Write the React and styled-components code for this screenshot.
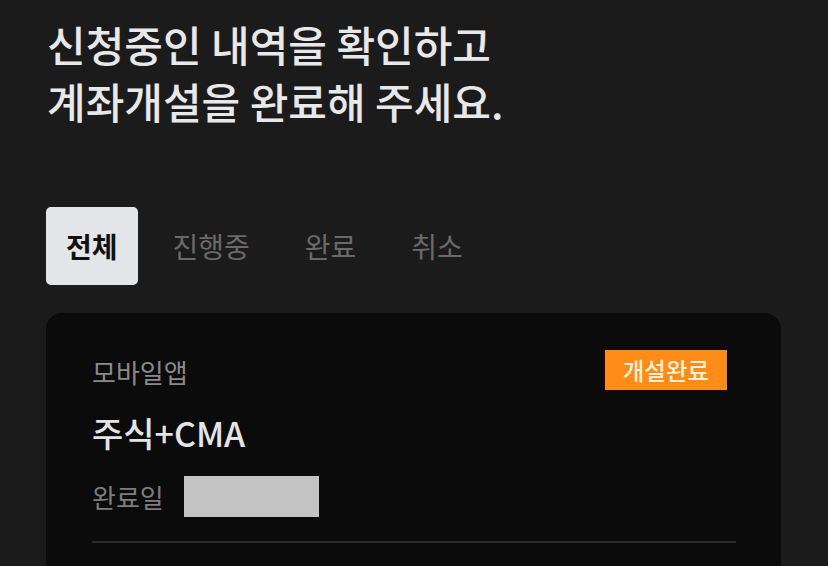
import React from "react";
import styled, { createGlobalStyle } from "styled-components";

const Global = createGlobalStyle`
  html, body { margin: 0; padding: 0; background: #1b1b1b; }
  body { font-family: "Noto Sans CJK KR", "Noto Sans", sans-serif; overflow: hidden; }
`;

const Page = styled.div`
  width: 828px;
  height: 566px;
  background: #1b1b1b;
  padding: 15px 47px 0 46px;
  box-sizing: border-box;
  overflow: hidden;
`;

const Title = styled.h1`
  margin: 0 0 0 1px;
  font-size: 42px;
  line-height: 57px;
  font-weight: 500;
  color: #e8e8ea;
  letter-spacing: 0;
`;

const Tabs = styled.div`
  display: flex;
  gap: 15px;
  margin-top: 78px;
`;

const Tab = styled.button`
  border: none;
  font-family: inherit;
  height: 78px;
  padding: 0 20px;
  border-radius: 5px;
  font-size: 28px;
  font-weight: ${(p) => (p.$active ? 700 : 400)};
  color: ${(p) => (p.$active ? "#111" : "#6a6a6a")};
  background: ${(p) => (p.$active ? "#e4e5e8" : "transparent")};
  cursor: pointer;
`;

const Card = styled.div`
  margin-top: 28px;
  background: #0b0b0b;
  border-radius: 16px;
  padding: 37px 45px 40px 46px;
  height: 400px;
  box-sizing: border-box;
`;

const TopRow = styled.div`
  display: flex;
  justify-content: space-between;
  align-items: flex-start;
`;

const Channel = styled.div`
  font-size: 26px;
  color: #8a8a8a;
  margin-top: 6px;
  line-height: 32px;
`;

const Badge = styled.div`
  background: #ff8c16;
  color: #fff1dc;
  font-size: 23.5px;
  font-weight: 500;
  width: 122px;
  height: 40px;
  margin-right: 9px;
  display: flex;
  align-items: center;
  justify-content: center;
`;

const Product = styled.div`
  font-size: 34px;
  font-weight: 500;
  color: #e4e4e6;
  margin-top: 23px;
  line-height: 40px;
`;

const DateRow = styled.div`
  display: flex;
  align-items: center;
  gap: 20px;
  margin-top: 23px;
`;

const DateLabel = styled.span`
  font-size: 26px;
  color: #7e7e7e;
`;

const Masked = styled.div`
  width: 135px;
  height: 41px;
  background: #c4c4c4;
`;

const Divider = styled.hr`
  border: none;
  height: 2px;
  background: #2a2a2a;
  margin: 24px 0 0;
`;

export default function App() {
  const tabs = ["전체", "진행중", "완료", "취소"];
  return (
    <Page>
      <Global />
      <Title>
        신청중인 내역을 확인하고
        <br />
        계좌개설을 완료해 주세요.
      </Title>
      <Tabs>
        {tabs.map((t, i) => (
          <Tab key={t} $active={i === 0}>
            {t}
          </Tab>
        ))}
      </Tabs>
      <Card>
        <TopRow>
          <Channel>모바일앱</Channel>
          <Badge>개설완료</Badge>
        </TopRow>
        <Product>주식+CMA</Product>
        <DateRow>
          <DateLabel>완료일</DateLabel>
          <Masked />
        </DateRow>
        <Divider />
      </Card>
    </Page>
  );
}
